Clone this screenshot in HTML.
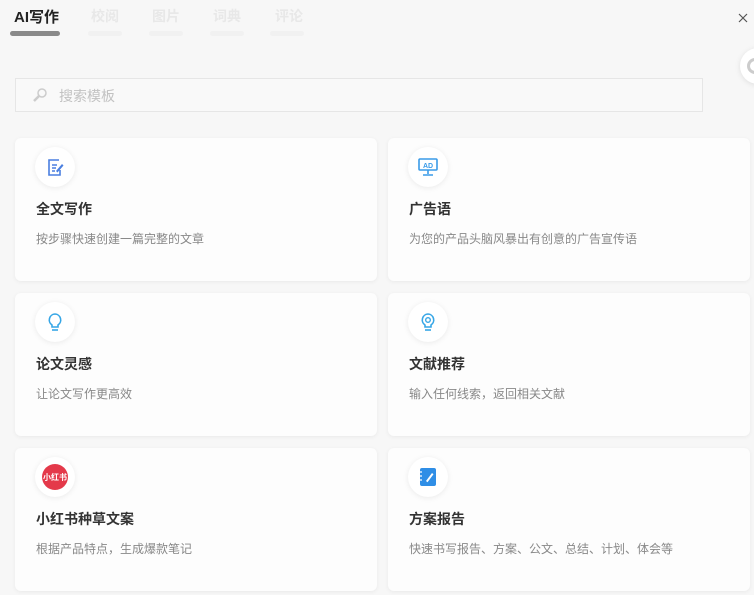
<!DOCTYPE html>
<html><head><meta charset="utf-8"><style>
*{margin:0;padding:0;box-sizing:border-box}
body{width:754px;height:595px;background:#f7f7f7;font-family:"Liberation Sans","Noto Sans CJK SC",sans-serif;position:relative;overflow:hidden}
.tab{position:absolute;top:6px;font-size:14px;color:#e8e8e8;font-weight:bold}
.ul{position:absolute;top:31px;height:5px;border-radius:3px;background:#f1f1f1}
.search{position:absolute;left:15px;top:78px;width:688px;height:34px;border:1px solid #e6e6e6;background:#f9f9f9}
.search span{position:absolute;left:43px;top:7px;font-size:14px;color:#c2c2c2}
.card{position:absolute;width:362px;height:143px;background:#fdfdfd;border-radius:6px;box-shadow:0 1px 4px rgba(0,0,0,.06)}
.ic{position:absolute;left:20px;top:9px;width:40px;height:40px;border-radius:50%;background:#fff;box-shadow:0 1px 6px rgba(0,0,0,.08);display:flex;align-items:center;justify-content:center}
.t{position:absolute;left:21px;top:61px;font-size:14px;font-weight:bold;color:#333}
.d{position:absolute;left:21px;top:92px;font-size:12px;color:#888}
</style></head><body>
<div class="tab" style="left:14px;color:#222;font-size:15px">AI写作</div>
<div class="ul" style="left:10px;width:50px;background:#8a8a8a"></div>
<div class="tab" style="left:91px">校阅</div><div class="ul" style="left:88px;width:34px"></div>
<div class="tab" style="left:152px">图片</div><div class="ul" style="left:149px;width:34px"></div>
<div class="tab" style="left:213px">词典</div><div class="ul" style="left:210px;width:34px"></div>
<div class="tab" style="left:275px">评论</div><div class="ul" style="left:270px;width:34px"></div>
<svg style="position:absolute;left:738px;top:13px" width="10" height="10" viewBox="0 0 10 10"><path d="M1 1L9 9M9 1L1 9" stroke="#555" stroke-width="1.2"/></svg>
<div style="position:absolute;left:740px;top:48px;width:36px;height:36px;border-radius:50%;background:#fff;box-shadow:0 1px 6px rgba(0,0,0,.1)"><div style="position:absolute;left:7px;top:10px;width:16px;height:16px;border:3px solid #ccc;border-radius:50%"></div></div>
<div class="search"><svg style="position:absolute;left:16px;top:8px" width="16" height="16" viewBox="0 0 16 16"><circle cx="10" cy="6" r="4" fill="none" stroke="#ccc" stroke-width="1.5"/><path d="M7 9L2 14" stroke="#ccc" stroke-width="2.5"/></svg><span>搜索模板</span></div>

<div class="card" style="left:15px;top:138px"><div class="ic"><svg width="22" height="22" viewBox="0 0 22 22"><path d="M15 4H5v15h11v-5" fill="none" stroke="#4a7fe0" stroke-width="1.6"/><path d="M8 9h5M8 12h4M8 15h3" stroke="#4a7fe0" stroke-width="1.5"/><path d="M12 15l6-7 1.5 1.5-6 7z" fill="#4a7fe0"/></svg></div><div class="t">全文写作</div><div class="d">按步骤快速创建一篇完整的文章</div></div>
<div class="card" style="left:388px;top:138px"><div class="ic"><svg width="24" height="22" viewBox="0 0 24 22"><rect x="3" y="3" width="18" height="11" rx="1" fill="none" stroke="#3a9be8" stroke-width="1.6"/><text x="7" y="12" font-size="7" font-weight="bold" fill="#3a9be8" font-family="Liberation Sans">AD</text><path d="M12 14v4M7 19h10" stroke="#3a9be8" stroke-width="1.6"/></svg></div><div class="t">广告语</div><div class="d">为您的产品头脑风暴出有创意的广告宣传语</div></div>
<div class="card" style="left:15px;top:293px"><div class="ic"><svg width="22" height="22" viewBox="0 0 22 22"><path d="M11 3a6 6 0 0 0-3 11v2h6v-2a6 6 0 0 0-3-11z" fill="none" stroke="#36a6e6" stroke-width="1.6"/><path d="M8 19h6" stroke="#36a6e6" stroke-width="1.6"/></svg></div><div class="t">论文灵感</div><div class="d">让论文写作更高效</div></div>
<div class="card" style="left:388px;top:293px"><div class="ic"><svg width="22" height="22" viewBox="0 0 22 22"><path d="M11 3a6 6 0 0 0-3 11v2h6v-2a6 6 0 0 0-3-11z" fill="none" stroke="#36a6e6" stroke-width="1.6"/><circle cx="11" cy="9" r="2.3" fill="none" stroke="#36a6e6" stroke-width="1.4"/><path d="M8 19h6" stroke="#36a6e6" stroke-width="1.6"/></svg></div><div class="t">文献推荐</div><div class="d">输入任何线索，返回相关文献</div></div>
<div class="card" style="left:15px;top:448px"><div class="ic"><div style="width:26px;height:26px;border-radius:50%;background:#e4394a;color:#fff;font-size:8px;font-weight:bold;display:flex;align-items:center;justify-content:center">小红书</div></div><div class="t">小红书种草文案</div><div class="d">根据产品特点，生成爆款笔记</div></div>
<div class="card" style="left:388px;top:448px"><div class="ic"><svg width="22" height="22" viewBox="0 0 22 22"><rect x="3" y="2" width="16" height="18" rx="2" fill="#2f8ee6"/><path d="M2 6h3M2 10h3M2 14h3" stroke="#fff" stroke-width="1.2"/><path d="M9 15l6-8 1.5 1.2-6 8z" fill="#fff"/></svg></div><div class="t">方案报告</div><div class="d">快速书写报告、方案、公文、总结、计划、体会等</div></div>
</body></html>
